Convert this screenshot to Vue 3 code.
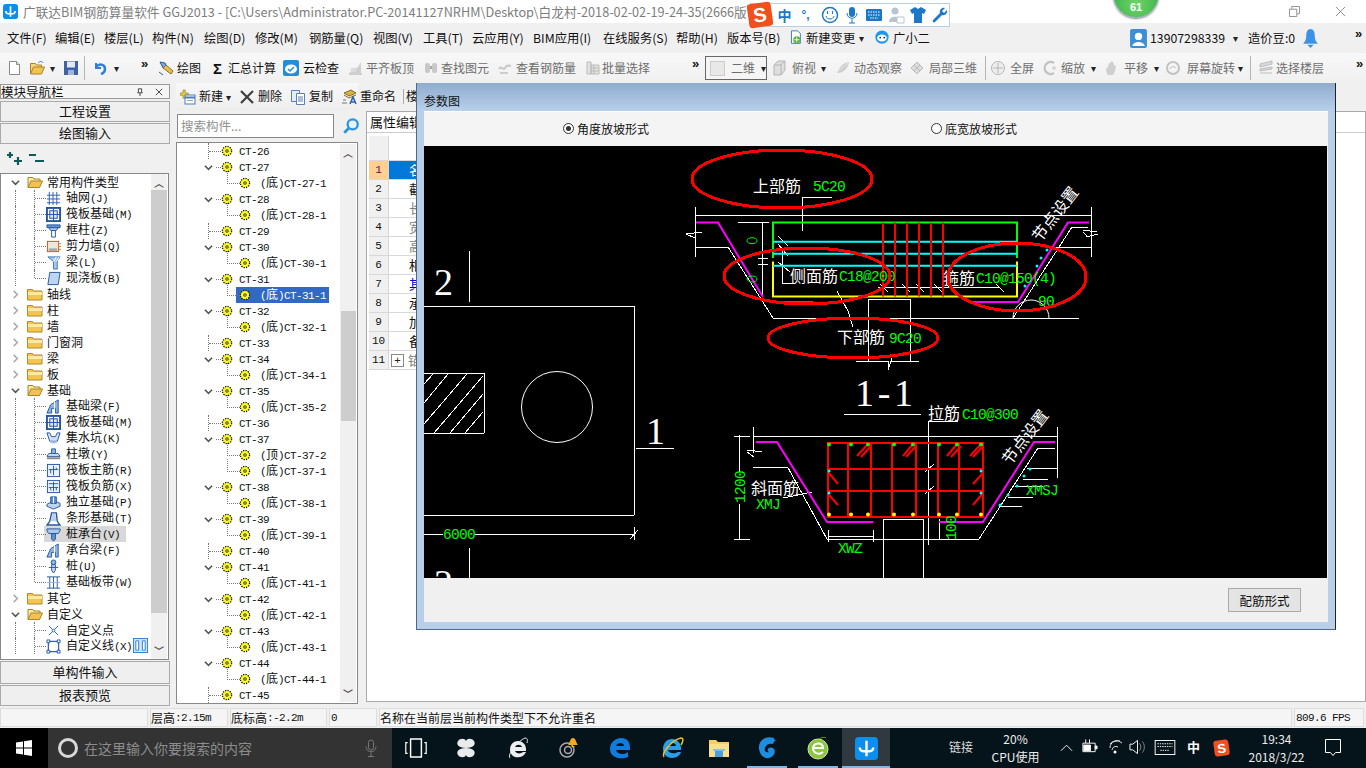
<script setup>
const ic = {
  doc: '<path d="M3.5 1.5h7l3 3v10h-10z" fill="#fff" stroke="#8a8a8a"/><path d="M10.5 1.5v3h3" fill="#ddd" stroke="#8a8a8a"/>',
  open: '<path d="M1.5 14V3.5h5l1 1.5h5v2" fill="#f6d77e" stroke="#a9822a"/><path d="M1.5 14l3-7h11l-3 7z" fill="#f3c253" stroke="#a9822a"/><path d="M9 3c2-2 4-2 5 0" fill="none" stroke="#3a78c0"/>',
  save: '<path d="M1 1h14v14H1z" fill="#3f62a6"/><path d="M4 1.500h8v6H4z" fill="#e3e9f4"/><path d="M5 10h6v5H5z" fill="#a4b6d6"/>',
  undo: '<path d="M4 3v5h5" fill="none" stroke="#2f7fd6" stroke-width="2"/><path d="M4 7c3-4 9-3 9 2 0 2-1 4-4 5" fill="none" stroke="#2f7fd6" stroke-width="2.500"/>',
  draw: '<path d="M2 2l5 1 2 4-4 1z" fill="#7fa8dc" stroke="#2e5c9c"/><path d="M5 8l8 6 2-3-7-6z" fill="#e8c04e" stroke="#8a6d1c"/><path d="M1 12l4 3" stroke="#2e5c9c"/>',
  cloud: '<rect x="0" y="0" width="16" height="16" rx="2" fill="#1f8fdc"/><ellipse cx="8" cy="9" rx="6" ry="4.500" fill="#fff"/><path d="M5 9l2 2 4-4" fill="none" stroke="#1f8fdc" stroke-width="1.500"/>',
  align: '<path d="M2 13l9-6 3-5v11z" fill="#cfcfcf"/><path d="M2 14h13" stroke="#aaa"/><path d="M4 8h5v4H4z" fill="#dcdcdc"/>',
  find: '<rect x="2" y="3" width="5" height="10" rx="2" fill="#c8c8c8"/><rect x="9" y="3" width="5" height="10" rx="2" fill="#c8c8c8"/><path d="M7 6h2v3H7z" fill="#aaa"/>',
  rebar: '<path d="M2 9c2-4 4 2 6-1 1-2 3-3 6-2" fill="none" stroke="#c6c6c6" stroke-width="2"/><path d="M3 13h8" stroke="#ccc" stroke-width="2"/>',
  batch: '<path d="M2 2h4v12H2zM6 5h8v9H6z" fill="#e2e2e2" stroke="#bbb"/><path d="M6 8h8M6 11h8M9 5v9" stroke="#bbb"/>',
  cube: '<path d="M3 5l4-4h7v9l-4 5H3z" fill="#dedede" stroke="#b5b5b5"/><path d="M3 5h7v10M10 5l4-4" fill="none" stroke="#b5b5b5"/>',
  orbit: '<path d="M2 13c2-6 6-10 12-11-1 6-5 11-12 11z" fill="#cfcfcf"/><path d="M3 11l10-8" stroke="#e8e8e8"/>',
  part3d: '<path d="M2 8l6-6 6 6-6 6z" fill="#dcdcdc" stroke="#bbb"/><path d="M5 5l6 6M11 5l-6 6" stroke="#bbb"/>',
  full: '<circle cx="8" cy="8" r="6.500" fill="#eee" stroke="#b5b5b5"/><path d="M8 3v10M3 8h10" stroke="#b5b5b5"/>',
  zoom: '<path d="M12 3a6 6 0 1 0 0 10" fill="none" stroke="#c4c4c4" stroke-width="2.500"/><circle cx="12" cy="8" r="2" fill="#d6d6d6"/>',
  pan: '<path d="M5 15c-3-4-2-7 0-8l1-4 2 0 0-2 2 1 1 3 2 1-1 5-2 4z" fill="#cfcfcf"/>',
  rotate: '<circle cx="8" cy="8" r="6" fill="none" stroke="#c2c2c2" stroke-width="2"/><path d="M5 9c1-3 4-3 6-1" fill="none" stroke="#bbb"/>',
  floor: '<path d="M2 4l12-3v3L2 7zM2 9l12-2v2L2 11zM2 13h12" fill="#dadada" stroke="#bdbdbd"/>',
  fclosed: '<path d="M.5 3.500h5l1 1.500h8.500v9H.5z" fill="#f3c64f" stroke="#b18a2a"/><path d="M1 6h14v3H1z" fill="#fbe9a8"/>',
  fopen: '<path d="M1 13V3.500h5l1 1.500h6v2" fill="#fbe9a8" stroke="#a88428"/><path d="M1 13.500l3-6.500h11.500l-3 6.500z" fill="#f3c253" stroke="#a88428"/>',
  grid: '<path d="M3.500 1v14M7.500 1v14M11.500 1v14M1 4.500h14M1 8.500h14M1 12.500h14" stroke="#2a5fae" fill="none"/>',
  raft: '<rect x="1" y="1" width="14" height="14" fill="none" stroke="#24549c" stroke-width="2"/><rect x="4" y="4" width="8" height="8" fill="#d7e5f5" stroke="#24549c"/><path d="M8 1v14M1 8h14" stroke="#24549c"/>',
  col: '<path d="M1 2h14v3H1z" fill="#5e95d4" stroke="#24549c"/><path d="M3 5h10l-2 3H5z" fill="#a9c8ea" stroke="#24549c"/><path d="M6 8h4v7H6z" fill="#fff" stroke="#24549c"/>',
  wall: '<rect x="1.500" y="2.500" width="12" height="11" fill="#efe6dc" stroke="#b65a1c"/><path d="M3 10h9v3H3z" fill="#a9a9a9"/><path d="M14 5h2M14 8h2M14 11h2" stroke="#d9782a"/>',
  beam: '<path d="M2 2h13l-3 4v9H8V7z" fill="#a9c8ea" stroke="#3a74bc"/><path d="M11 2l-3 5M14 2l-3 5" stroke="#fff"/>',
  slab: '<path d="M4 1.500h11l-2 13H2z" fill="#bcd6f2" stroke="#24549c"/>',
  fbeam: '<path d="M1 15l4-9 8-5v14H10v-5H6v5z" fill="#8fb6e4" stroke="#24549c"/><path d="M9 3v12" stroke="#fff"/>',
  pit: '<path d="M1 2l3 9h8l3-9-3 0-2 4H6L4 2z" fill="#cfe0f4" stroke="#24549c"/><path d="M3 11c2 3 8 3 10 0" fill="#a9c3df"/>',
  cap: '<path d="M6 2h4v5H6z" fill="#8fb6e4" stroke="#24549c"/><path d="M3 7h10l2 3H1z" fill="#d7e5f5" stroke="#24549c"/><path d="M1 12h14" stroke="#888" stroke-width="2"/>',
  rmain: '<rect x="1.500" y="1.500" width="13" height="13" fill="#e8f0fa" stroke="#24549c"/><path d="M8 3v10M3 7h10M5 7v4M11 7v-2" stroke="#24549c" fill="none"/>',
  rneg: '<rect x="1.500" y="1.500" width="13" height="13" fill="#e8f0fa" stroke="#24549c"/><path d="M3 5h10M3 9h10M8 3v10M5 9v3M11 9v3" stroke="#24549c" fill="none"/>',
  iso: '<path d="M1 10l7-4 7 3v3l-7 3-7-3z" fill="#c0d6f0" stroke="#24549c"/><path d="M5 2h6v7H5z" fill="#5e95d4" stroke="#24549c"/><path d="M8 2v7" stroke="#fff"/>',
  strip: '<path d="M1 15l3-4 2-9h5l1 9 3 4z" fill="#fff" stroke="#24549c" stroke-width="1.500"/><path d="M7 3h3l1 8H5z" fill="#b8d0ee"/>',
  pcap: '<path d="M1 2h14v2l-2 3H3L1 4z" fill="#a9c8ea" stroke="#24549c"/><path d="M6 7h4v6l-2 2-2-2z" fill="#5e95d4" stroke="#24549c"/>',
  pile: '<circle cx="8" cy="3.500" r="2.500" fill="#8fb6e4" stroke="#24549c"/><path d="M6 6h4v6l-2 3-2-3z" fill="#c9dcf2" stroke="#24549c"/><path d="M3 9h10" stroke="#24549c"/>',
  band: '<path d="M1 2h14M1 14h14M4 2v12M8 2v12M12 2v12" stroke="#24549c" fill="none"/><path d="M1 8h14" stroke="#8fb6e4"/>',
  pt: '<path d="M3 3l10 10M13 3L3 13" stroke="#2a65b0"/><circle cx="8" cy="8" r="1.500" fill="#fff" stroke="#2a65b0"/>',
  ln: '<rect x="2.500" y="2.500" width="11" height="11" fill="#fff" stroke="#24549c" stroke-width="1.200"/><path d="M1 1h3v3H1zM12 1h3v3h-3zM1 12h3v3H1zM12 12h3v3h-3z" fill="#fff" stroke="#24549c"/>',
  ct: '<circle cx="6" cy="6" r="4.600" fill="#ffff20" stroke="#111" stroke-width="1.300" stroke-dasharray="1.300 1.100"/><circle cx="6" cy="6" r="1.800" fill="#444"/><circle cx="6" cy="6" r=".7" fill="#ffff20"/>',
  plus: '<path d="M4 0h3v4h4v3H7v4H4V7H0V4h4z" fill="#e9cf4e" stroke="#8a7414" stroke-width=".8" transform="translate(0 1) scale(.75)"/><rect x="5" y="6" width="10" height="9" fill="#fff" stroke="#4a7cbc"/><path d="M5 8.500h10" stroke="#4a7cbc" stroke-width="2"/><path d="M7 11.500h6" stroke="#9ab"/>',
  del: '<path d="M2 2l12 12M14 2L2 14" stroke="#404040" stroke-width="2.200"/>',
  copy: '<path d="M1.500 1.500h8v11h-8z" fill="#e4eefa" stroke="#5a7fb0"/><path d="M6.500 4.500h8v11h-8z" fill="#fff" stroke="#5a7fb0"/><path d="M8 8h5M8 10h5M8 12h5" stroke="#5a7fb0"/>',
  rename: '<path d="M3 4l7-3 5 3-7 3z" fill="#d8b24a" stroke="#8a6d1c"/><path d="M3 6l5 3 7-3" fill="none" stroke="#8a6d1c"/><path d="M1 14h5M2 11h3" stroke="#777"/><path d="M9 15l3-7 3 7M10 13h4" fill="none" stroke="#2e5fb0" stroke-width="1.500"/>',
  lens: '<circle cx="9.500" cy="6.500" r="4.500" fill="#e4f3fc" stroke="#2b95dc" stroke-width="2"/><path d="M6 10l-4 4" stroke="#2b95dc" stroke-width="2.500"/>',
  file: '<path d="M4 1h7l3 3v11H4z" fill="#fff" stroke="#2a6dbc"/><circle cx="10" cy="11" r="4" fill="#5aae32"/><path d="M10 8v6M7 11h6" stroke="#fff"/>',
  mascot: '<circle cx="8" cy="8" r="7.500" fill="#1c9ae8"/><ellipse cx="8" cy="9" rx="5.500" ry="4" fill="#fff"/><circle cx="6" cy="8.500" r="1" fill="#124"/><circle cx="10.500" cy="8.500" r="1" fill="#124"/>',
  user: '<rect width="16" height="18" rx="2" fill="#3b8fd9"/><circle cx="8" cy="7" r="3.500" fill="#fff"/><path d="M2 16c1-5 11-5 12 0z" fill="#fff"/>',
  bell: '<path d="M8 0c3 0 4 3 4 6 0 4 1 6 3 8H1c2-2 3-4 3-8 0-3 1-6 4-6z" fill="#3d92e6"/><path d="M5 15h6l-3 3z" fill="#3d92e6"/>',
}

const place = list => list.map((it, i) => ({
  ...it,
  w: (list[i + 1] ? list[i + 1].x : 1366) - it.x,
  iw: it.tx ? it.tx - it.x : 0,
}))

const menus = place([
  { x: 7, t: '文件(F)' }, { x: 55, t: '编辑(E)' }, { x: 104, t: '楼层(L)' }, { x: 152, t: '构件(N)' },
  { x: 204, t: '绘图(D)' }, { x: 255, t: '修改(M)' }, { x: 309, t: '钢筋量(Q)' }, { x: 373, t: '视图(V)' },
  { x: 423, t: '工具(T)' }, { x: 472, t: '云应用(Y)' }, { x: 533, t: 'BIM应用(I)' }, { x: 603, t: '在线服务(S)' },
  { x: 676, t: '帮助(H)' }, { x: 727, t: '版本号(B)' },
  { x: 787, tx: 806, t: '新建变更', i: 'file' }, { x: 859, a: 1 },
  { x: 874, tx: 893, t: '广小二', i: 'mascot' },
  { x: 1130, tx: 1150, t: '13907298339', i: 'user' }, { x: 1233, a: 1 },
  { x: 1248, t: '造价豆:0' }, { x: 1302, i: 'bell', tx: 1340 }, { x: 1353, m: 1 },
])

const tools = place([
  { x: 6, i: 'doc', tx: 29 }, { x: 29, i: 'open', tx: 50 }, { x: 50, a: 1 }, { x: 63, i: 'save', tx: 84 },
  { x: 84, s: 1 }, { x: 92, i: 'undo', tx: 114 }, { x: 114, a: 1 }, { x: 139, m: 1 },
  { x: 158, tx: 177, t: '绘图', i: 'draw' }, { x: 211, tx: 228, t: '汇总计算', sig: 1 },
  { x: 283, tx: 303, t: '云检查', i: 'cloud' }, { x: 347, tx: 366, t: '平齐板顶', i: 'align', g: 1 },
  { x: 423, tx: 441, t: '查找图元', i: 'find', g: 1 }, { x: 497, tx: 516, t: '查看钢筋量', i: 'rebar', g: 1 },
  { x: 585, tx: 602, t: '批量选择', i: 'batch', g: 1 }, { x: 690, m: 1 }, { x: 705, combo: 1 },
  { x: 771, tx: 792, t: '俯视', i: 'cube', g: 1 }, { x: 821, a: 1 }, { x: 835, tx: 854, t: '动态观察', i: 'orbit', g: 1 },
  { x: 909, tx: 929, t: '局部三维', i: 'part3d', g: 1 }, { x: 985, s: 1 }, { x: 990, tx: 1010, t: '全屏', i: 'full', g: 1 },
  { x: 1042, tx: 1061, t: '缩放', i: 'zoom', g: 1 }, { x: 1091, a: 1 }, { x: 1103, tx: 1124, t: '平移', i: 'pan', g: 1 },
  { x: 1154, a: 1 }, { x: 1165, tx: 1187, t: '屏幕旋转', i: 'rotate', g: 1 }, { x: 1238, a: 1 },
  { x: 1250, s: 1 }, { x: 1258, tx: 1276, t: '选择楼层', i: 'floor', g: 1 }, { x: 1354, m: 1 },
])

const nav = [
  { f: 'open', t: '常用构件类型' },
  { i: 'grid', t: '轴网(J)' }, { i: 'raft', t: '筏板基础(M)' }, { i: 'col', t: '框柱(Z)' }, { i: 'wall', t: '剪力墙(Q)' },
  { i: 'beam', t: '梁(L)' }, { i: 'slab', t: '现浇板(B)', last: 1 },
  { f: 'closed', t: '轴线' }, { f: 'closed', t: '柱' }, { f: 'closed', t: '墙' }, { f: 'closed', t: '门窗洞' },
  { f: 'closed', t: '梁' }, { f: 'closed', t: '板' },
  { f: 'open', t: '基础' },
  { i: 'fbeam', t: '基础梁(F)' }, { i: 'raft', t: '筏板基础(M)' }, { i: 'pit', t: '集水坑(K)' }, { i: 'cap', t: '柱墩(Y)' },
  { i: 'rmain', t: '筏板主筋(R)' }, { i: 'rneg', t: '筏板负筋(X)' }, { i: 'iso', t: '独立基础(P)' }, { i: 'strip', t: '条形基础(T)' },
  { i: 'pcap', t: '桩承台(V)', sel: 1 }, { i: 'fbeam', t: '承台梁(F)' }, { i: 'pile', t: '桩(U)' }, { i: 'band', t: '基础板带(W)', last: 1 },
  { f: 'closed', t: '其它' },
  { f: 'open', t: '自定义' },
  { i: 'pt', t: '自定义点' }, { i: 'ln', t: '自定义线(X)' },
]

const groups = [
  ['CT-26'], ['CT-27', '(底)CT-27-1'], ['CT-28', '(底)CT-28-1'], ['CT-29'], ['CT-30', '(底)CT-30-1'],
  ['CT-31', '(底)CT-31-1'], ['CT-32', '(底)CT-32-1'], ['CT-33'], ['CT-34', '(底)CT-34-1'], ['CT-35', '(底)CT-35-2'],
  ['CT-36'], ['CT-37', '(顶)CT-37-2', '(底)CT-37-1'], ['CT-38', '(底)CT-38-1'], ['CT-39', '(底)CT-39-1'], ['CT-40'],
  ['CT-41', '(底)CT-41-1'], ['CT-42', '(底)CT-42-1'], ['CT-43', '(底)CT-43-1'], ['CT-44', '(底)CT-44-1'], ['CT-45'],
]
const cts = groups.flatMap(g => [
  { t: g[0], d: 0, kids: g.length > 1 },
  ...g.slice(1).map(t => ({ t, d: 1, sel: t.includes('31-1') })),
])

const runs = s => s.split(/([\u4e00-\u9fff]+)/).filter(Boolean).map(t => ({ t, zh: /[\u4e00-\u9fff]/.test(t) }))

const props = [
  { t: '名', c: 'on' }, { t: '截' }, { t: '长', c: 'dim' }, { t: '宽', c: 'dim' }, { t: '高', c: 'dim' },
  { t: '相' }, { t: '其', c: 'link' }, { t: '承' }, { t: '加' }, { t: '备' }, { t: '锚', c: 'dim', plus: 1 },
]

const hatch = [[424,384,433,374],[424,403,448,374],[424,424,467,374],[434,433,483,376],[450,433,483,394],[465,433,483,412]]
const w1 = [
  [695,215.500,1091,215.500],[695,207,695,257],[1091,207,1091,257],[695,247,728,247],[728,247,773,318],[773,318,1079,318],
  [1013,318,1072,227],[1072,227,1088,227],[1052,247,1091,247],[802,197,832,197],[802,197,802,231],[782,250,782,283],[782,283,795,283],
  [868,299,910,299],[868,299,868,361],[910,299,910,361],[856,361,888,361],[890,361,919,361],[888,361,888,370],[888,370,892,358],
  [738,222,769,222],[762,222,762,296],[758,258,768,258],[758,264,768,264],
  [837,291,848,311],[848,311,853,327],[778,236,788,246],[778,244,788,256],[778,262,790,272],
  [878,287,1000,287],[880,284,888,292],[902,284,910,292],[916,284,924,292],[934,284,942,292],[946,284,954,292],[996,284,1004,292],
  [686,234,702,232],[686,234,695,238],[695,238,695,232],[1083,230,1097,232],[1083,232,1088,237],[1086,237,1098,234],
  [844,414,921,414],[928,421.700,958,421.700],[928,421,928,545],[753,436,1057,436],[753,427,753,453],[1057,427,1057,478],
  [739,435,739,472],[739,504,739,539],[734,436,750,436],[734,539,750,539],[753,467.700,788,467.700],[788,467.700,827,539],[827,539,979,539],
  [979,539,1038,448],[1038,448,1055,448],[1027,468,1057,468],[883,519,923,519],[883,519,883,578],[923,519,923,578],
  [783,498,812,492],[828,536,873,536],[828,530,828,542],[873,530,873,542],[939,519,939,540],[1023,479,1048,479],
  [1015,486,1043,486],[1008,497,1033,497],[1000,506,1022,506],[925,472,934,464],[925,494,934,486],[747,450,762,452],[747,452,754,457],
  [634,306,424,306],[634,306,634,515],[634,515,424,515],[424,373,484,373],[484,373,484,433],[484,433,424,433],
  [469,251,469,302],[636,448,674,448],[424,534,443,534],[475,534,634,534],[634,527,634,540],[630,539,638,530],[469,548,469,578],
]
const mag = ['696,222.500 718,222.500 763,297','782,302 813,302','970,302 1018,302 1068,222.500 1089,222.500','756,442 777,442 827,522 873,522','939,522 983,522 1034,442 1055,442']
const reds = [883,895,907,919,931,943]
const gridV = [848,871,892,916,938,959]
const gridS = [[857,456,868,444],[861,457,871,446],[903,456,913,444],[906,457,916,446],[947,456,957,444],[951,457,961,446],[970,456,981,444],[973,457,983,446],[829,473,838,484],[829,495,838,505],[973,484,983,473],[973,505,983,493]]
const topX = [829,851,868,894,913,939,957,981]
const cyanDots = [[829,471],[829,493],[981,471],[981,493],[1000,505],[1008,495],[1017,486],[1024,476],[1030,469],[1047,250],[1041,258],[1037,266],[1025,286]]
</script>

<template>
  <div class="app">
    <header class="title">
      <svg class="logo" viewBox="0 0 16 16"><rect width="16" height="16" rx="3" fill="#0a8fee"/><path d="M8 2.500v11M3 7.500c0 3 2 3 5 3s5 0 5-3" fill="none" stroke="#fff" stroke-width="1.800"/></svg>
      <span class="ttext">广联达BIM钢筋算量软件 GGJ2013 - [C:\Users\Administrator.PC-20141127NRHM\Desktop\白龙村-2018-02-02-19-24-35(2666版</span>
      <svg class="wc" viewBox="0 0 12 12"><path d="M.5 3.500h8v8h-8zM3 3V.5h8.500v8H9" fill="none" stroke="#888"/></svg>
      <svg class="wc close" viewBox="0 0 12 12"><path d="M1 1l10 10M11 1L1 11" stroke="#888"/></svg>
    </header>

    <nav class="bar menu">
      <div v-for="m in menus" :key="m.x" class="slot" :style="{ width: m.w + 'px' }">
        <span v-if="m.iw" class="ico" :style="{ width: m.iw + 'px' }"><svg :class="m.i === 'user' || m.i === 'bell' ? 'i18' : 'i16'" viewBox="0 0 16 18" v-html="ic[m.i]"></svg></span>
        <span v-if="m.a" class="arr">▾</span>
        <span v-else-if="m.m" class="more">»</span>
        <span v-else>{{ m.t }}</span>
      </div>
    </nav>

    <div class="bar tools">
      <div v-for="t in tools" :key="t.x" class="slot" :class="{ gray: t.g }" :style="{ width: t.w + 'px' }">
        <span v-if="t.sig" class="ico sig" :style="{ width: t.iw + 'px' }">Σ</span>
        <span v-else-if="t.iw" class="ico" :style="{ width: t.iw + 'px' }"><svg class="i16" viewBox="0 0 16 16" v-html="ic[t.i]"></svg></span>
        <span v-if="t.a" class="arr">▾</span>
        <span v-else-if="t.m" class="more">»</span>
        <span v-else-if="t.s" class="sep"></span>
        <span v-else-if="t.combo" class="combo"><i class="sq"></i><span>二维</span><span class="arr">▾</span></span>
        <span v-else>{{ t.t }}</span>
      </div>
    </div>

    <main class="main">
      <aside class="left">
        <div class="nav-head"><span>模块导航栏</span><span class="pin">
          <svg viewBox="0 0 10 10"><path d="M3 1h4v4l1 1H2l1-1zM5 6v4" fill="none" stroke="#222"/></svg>
          <svg viewBox="0 0 10 10"><path d="M1 1l8 8M9 1L1 9" stroke="#222"/></svg></span></div>
        <button class="btn b1">工程设置</button>
        <button class="btn">绘图输入</button>
        <div class="exp">
          <svg viewBox="0 0 20 16"><path d="M4 1v6M1 4h6M12 6v8M8 10h8" stroke="#0c5a5a" stroke-width="2.200"/></svg>
          <svg viewBox="0 0 20 16"><path d="M1 4h7M7 10h9" stroke="#0c5a5a" stroke-width="2.200"/></svg>
        </div>
        <div class="tree">
          <div class="scrollv nav-sb"><span class="up">︿</span><i class="thumb"></i><span class="down">﹀</span></div>
          <div v-for="(n, i) in nav" :key="i" class="nrow" :class="n.f ? 'top' : 'leaf'">
            <template v-if="n.f">
              <svg class="chev" viewBox="0 0 10 10"><path :d="n.f === 'open' ? 'M1 3l4 4 4-4' : 'M3 1l4 4-4 4'" fill="none" :stroke="n.f === 'open' ? '#555' : '#aaa'" stroke-width="1.800"/></svg>
              <svg class="fold" viewBox="0 0 16 16" v-html="ic['f' + n.f]"></svg>
              <span class="zh top-t">{{ n.t }}</span>
            </template>
            <template v-else>
              <i class="g0"></i><i class="g1" :class="{ last: n.last }"></i>
              <span class="nsel" :class="{ on: n.sel }">
                <svg class="nic" viewBox="0 0 16 16" v-html="ic[n.i]"></svg>
                <span class="lbl"><span v-for="(r, k) in runs(n.t)" :key="k" :class="r.zh ? 'zh' : 'la'">{{ r.t }}</span></span>
              </span>
            </template>
          </div>
          <svg class="float" viewBox="0 0 16 16"><rect x=".5" y=".5" width="15" height="15" fill="#cfe4fa" stroke="#2a7fd6"/><path d="M3 3h3v10H3zM10 3h3v10h-3z" fill="#fff" stroke="#2a7fd6"/></svg>
        </div>
        <button class="btn b2">单构件输入</button>
        <button class="btn">报表预览</button>
      </aside>

      <section class="mid">
        <div class="mtool">
          <span class="mi"><svg class="i16" viewBox="0 0 16 16" v-html="ic.plus"></svg>新建<span class="arr">▾</span></span>
          <span class="mi"><svg class="i16" viewBox="0 0 16 16" v-html="ic.del"></svg>删除</span>
          <span class="mi"><svg class="i16" viewBox="0 0 16 16" v-html="ic.copy"></svg>复制</span>
          <span class="mi"><svg class="i16" viewBox="0 0 16 16" v-html="ic.rename"></svg>重命名</span>
          <span class="mi sepl">楼</span>
        </div>
        <div class="search">
          <span class="sbox">搜索构件...</span>
          <svg class="i18" viewBox="0 0 16 16" v-html="ic.lens"></svg>
        </div>
        <div class="cts">
          <div class="scrollv ct-sb"><span class="up">︿</span><i class="thumb"></i><span class="down">﹀</span></div>
          <div v-for="c in cts" :key="c.t" class="crow" :class="c.d ? 'kid' : 'par'">
            <template v-if="c.d === 0">
              <svg v-if="c.kids" class="cchev" viewBox="0 0 10 10"><path d="M1 3l4 4 4-4" fill="none" stroke="#555" stroke-width="1.800"/></svg>
              <i v-else class="cg"></i>
              <i class="cdot"></i>
            </template>
            <i v-else class="kg"></i>
            <span class="csel" :class="{ on: c.sel }">
              <svg class="cic" viewBox="0 0 12 12" v-html="ic.ct"></svg>
              <span class="lbl"><span v-for="(r, k) in runs(c.t)" :key="k" :class="r.zh ? 'zh' : 'la'">{{ r.t }}</span></span>
            </span>
          </div>
        </div>
      </section>

      <section class="right">
        <div class="tab">属性编辑</div>
        <div class="table">
          <div class="thead"><span class="num"></span><span class="cell"></span></div>
          <div v-for="(p, i) in props" :key="i" class="trow">
            <span class="num" :class="{ cur: i === 0 }">{{ i + 1 }}</span>
            <span class="cell" :class="p.c"><b v-if="p.plus" class="plus">+</b>{{ p.t }}</span>
          </div>
        </div>
      </section>
    </main>

    <footer class="status">
      <span class="st s0"></span>
      <span class="st s1"><span class="zh">层高</span><span class="la">:2.15m</span></span>
      <span class="st s2"><span class="zh">底标高</span><span class="la">:-2.2m</span></span>
      <span class="st s3"><span class="la">0</span></span>
      <span class="st s4"><span class="zh">名称在当前层当前构件类型下不允许重名</span></span>
      <span class="st s5"><span class="la">809.6 FPS</span></span>
    </footer>

    <div class="task">
      <div class="start"><svg viewBox="0 0 16 16"><path d="M0 2.500l7-1v6H0zM8 1.300l8-1.300v7.500H8zM0 8.500h7v6l-7-1zM8 8.500h8V16l-8-1.300z" fill="#fff"/></svg></div>
      <div class="tsearch">
        <i class="cortana"></i><span>在这里输入你要搜索的内容</span>
        <svg class="mic" viewBox="0 0 12 18"><rect x="3.500" y=".5" width="5" height="10" rx="2.500" fill="none" stroke="#777"/><path d="M1 7c0 7 10 7 10 0M6 13v4M3 17h6" fill="none" stroke="#777"/></svg>
      </div>
      <div class="apps">
        <span class="app-i a0"><svg viewBox="0 0 20 20"><path d="M5.500 2.500h9v15h-9z" fill="none" stroke="#fff" stroke-width="1.200"/><path d="M3 5.500H1.500v9H3M17 5.500h1.500v9H17" fill="none" stroke="#fff"/></svg></span>
        <span class="app-i a1"><svg viewBox="0 0 24 24"><path d="M12 12C4 12 2 8 4 5s7-3 8 0c1-3 6-3 8 0s0 7-8 7c8 0 10 4 8 7s-7 3-8 0c-1 3-6 3-8 0s0-7 8-7z" fill="#e8eaec"/></svg></span>
        <span class="app-i a2"><svg viewBox="0 0 24 24"><path d="M4 14C4 8 8 5 12 5s8 3 8 8v2H9c1 3 6 3 8 1h3c-2 5-8 6-11 5-3-1-5-4-5-7zm5-3h7c-1-3-6-3-7 0z" fill="#eee"/><path d="M4 22C1 18 12 5 19 2c2 0 3 1 2 5" fill="none" stroke="#eee"/></svg></span>
        <span class="app-i a3"><svg viewBox="0 0 24 24"><circle cx="10" cy="14" r="7" fill="none" stroke="#aaa" stroke-width="1.500"/><circle cx="11" cy="14" r="3.500" fill="none" stroke="#aaa" stroke-width="1.500"/><path d="M16 2c-3 0-3 5-5 7h10c-2-2-2-7-5-7zM14 10h4l-2 2z" fill="#f5a623"/></svg></span>
        <span class="app-i a4"><svg viewBox="0 0 24 24"><path d="M2 13C2 6 8 2 13 2c6 0 9 4 9 10v2H8c1 5 9 5 12 2v5c-7 3-18 1-18-8zm6-3h8c0-4-7-4-8 0z" fill="#0f7ce0"/></svg></span>
        <span class="app-i a5"><svg viewBox="0 0 24 24"><path d="M3 13C3 7 7 3 12 3s9 4 9 9v2H8c1 4 7 4 10 2h3c-2 6-9 7-13 5-3-1-5-4-5-8zm5-3h8c0-4-7-4-8 0z" fill="#2a9fe8"/><path d="M4 21C1 17 12 4 21 2c3 0 2 4 0 7" fill="none" stroke="#f0c020" stroke-width="1.500"/></svg></span>
        <span class="app-i a6"><svg viewBox="0 0 24 24"><path d="M2 4h7l2 2h11v4H2z" fill="#f5d060"/><path d="M2 8h20v13H2z" fill="#fbe08a"/><path d="M8 14h8v7H8z" fill="#4a9fe0"/><path d="M6 13h12v2H6z" fill="#7cc4f0"/></svg></span>
        <span class="app-i a7 und"><svg viewBox="0 0 24 24"><path d="M19 2C9-1 3 6 4 13c1 7 6 10 10 9 5-1 7-6 5-9-2-2-5-2-6 0-1 1 0 3 1 3-3 1-5-1-4-4 1-4 5-5 8-4 0-2 2-3 3-4-1 0-2 0-2-2z" fill="#1c8de0"/></svg></span>
        <span class="app-i a8 und"><svg viewBox="0 0 24 24"><circle cx="12" cy="13" r="10" fill="#8cc63f" stroke="#cde9a5"/><path d="M7 12h10c0-6-9-6-10 0 0 6 7 7 10 4" fill="none" stroke="#fff" stroke-width="2"/><path d="M13 3c3-2 6-2 7-1" fill="none" stroke="#5a9a20"/></svg></span>
        <span class="app-i a9 und"><svg viewBox="0 0 24 24"><rect width="24" height="24" rx="4" fill="#0a8fee"/><path d="M12 4v16M5 11c0 4 3 4 7 4s7 0 7-4" fill="none" stroke="#fff" stroke-width="2.500"/></svg></span>
      </div>
      <div class="tray">
        <span class="tr-link">链接</span>
        <span class="cpu"><span>20%</span><span>CPU使用</span></span>
        <svg class="ti t1" viewBox="0 0 14 8"><path d="M1 7l6-6 6 6" fill="none" stroke="#fff"/></svg>
        <svg class="ti t2" viewBox="0 0 18 16"><path d="M2 5h13v9H2z" fill="none" stroke="#fff"/><path d="M3 7h7v6H3zM15 8h2v3h-2zM5 1v4M9 1v4" fill="#fff" stroke="#fff"/></svg>
        <svg class="ti t3" viewBox="0 0 14 14"><path d="M1 8a7 7 0 0 1 12-5M3 10a4 4 0 0 1 6-3M1 4a10 10 0 0 1 10-3" fill="none" stroke="#ddd"/><circle cx="6" cy="12" r="1.500" fill="#fff"/></svg>
        <svg class="ti t4" viewBox="0 0 18 16"><path d="M1 5h3l5-4v14l-5-4H1z" fill="none" stroke="#fff"/><path d="M11 4c2 2 2 6 0 8M14 2c3 3 3 9 0 12" fill="none" stroke="#888"/></svg>
        <svg class="ti t5" viewBox="0 0 22 16"><rect x=".5" y=".5" width="21" height="15" fill="none" stroke="#fff"/><path d="M3 4h16M3 7h16M6 11h10" stroke="#fff" stroke-dasharray="1.500 1"/></svg>
        <span class="t6">中</span>
        <span class="t7"><b>S</b></span>
        <span class="clock"><span>19:34</span><span>2018/3/22</span></span>
        <svg class="ti t8" viewBox="0 0 16 18"><path d="M.5 .5h15v13h-5l-2.500 3-2.500-3h-5z" fill="none" stroke="#fff"/></svg>
      </div>
    </div>

    <section class="dlg">
      <div class="dlg-t">参数图</div>
      <div class="dlg-b">
        <div class="radios">
          <label class="radio"><i class="dot on"></i>角度放坡形式</label>
          <label class="radio r2"><i class="dot"></i>底宽放坡形式</label>
        </div>
        <svg class="cad" viewBox="424 146 903 432">
          <rect x="424" y="146" width="903" height="432" fill="#000"/>
          <g stroke="#fff" shape-rendering="crispEdges">
            <line v-for="(l, i) in w1" :key="i" :x1="l[0]" :y1="l[1]" :x2="l[2]" :y2="l[3]"/>
            <line v-for="(l, i) in hatch" :key="'h' + i" :x1="l[0]" :y1="l[1]" :x2="l[2]" :y2="l[3]"/>
          </g>
          <circle cx="557" cy="407" r="35.500" fill="none" stroke="#fff"/>
          <polyline v-for="(m, i) in mag" :key="'m' + i" :points="m" fill="none" stroke="#f0f" stroke-width="2"/>
          <path d="M773 258V222.500H1017V258" fill="none" stroke="#0f0" stroke-width="2"/>
          <path d="M773 261.500V296.500H1017V261.500" fill="none" stroke="#ff0" stroke-width="2"/>
          <path d="M773 241.700H1017M773 253.700H1017M773 265.700H1017" stroke="#0ff" stroke-width="2"/>
          <g stroke="#f00" stroke-width="2">
            <line v-for="x in reds" :key="x" :x1="x" y1="222.500" :x2="x" y2="296.500"/>
            <rect x="828" y="443" width="155" height="74" fill="none"/>
            <line v-for="x in gridV" :key="'v' + x" :x1="x" y1="443" :x2="x" y2="517"/>
            <path d="M828 469H983M828 491H983"/>
            <line v-for="(l, i) in gridS" :key="'s' + i" :x1="l[0]" :y1="l[1]" :x2="l[2]" :y2="l[3]"/>
          </g>
          <circle v-for="x in topX" :key="'g' + x" :cx="x" cy="444.500" r="2" fill="#0f0"/>
          <circle v-for="x in topX" :key="'y' + x" :cx="x" cy="514.500" r="2" fill="#ff0"/>
          <circle v-for="(d, i) in cyanDots" :key="'c' + i" :cx="d[0]" :cy="d[1]" r="1.500" fill="#0ff"/>
          <ellipse cx="752" cy="240.700" rx="5" ry="3" fill="none" stroke="#0f0"/>
          <ellipse cx="752" cy="279" rx="5" ry="3" fill="none" stroke="#0f0"/>
          <path d="M1013 318a18 18 0 0 1 18-18a18 18 0 0 1 18 18" fill="none" stroke="#fff"/>

          <text class="ser" x="434" y="295" font-size="38">2</text>
          <text class="ser" x="434" y="596" font-size="38">2</text>
          <text class="ser" x="646" y="444" font-size="38">1</text>
          <text class="ser" x="855" y="406" font-size="38" textLength="58" lengthAdjust="spacing">1-1</text>

          <text class="zh-c" x="753" y="192" font-size="16">上部筋</text>
          <text class="gn" x="813" y="191">5C20</text>
          <text class="zh-c" x="790" y="282" font-size="16">侧面筋</text>
          <text class="gn" x="839" y="281">C18@200</text>
          <text class="zh-c" x="943" y="284" font-size="16">箍筋</text>
          <text class="gn" x="976" y="283">C10@150(4)</text>
          <text class="gn" x="1038" y="306">90</text>
          <text class="zh-c" x="837" y="343" font-size="16">下部筋</text>
          <text class="gn" x="889" y="343">9C20</text>
          <text class="zh-c" x="928" y="419" font-size="16">拉筋</text>
          <text class="gn" x="962" y="419">C10@300</text>
          <text class="zh-c" x="751" y="494" font-size="16">斜面筋</text>
          <text class="gn" x="756" y="509">XMJ</text>
          <text class="gn" x="838" y="553">XWZ</text>
          <text class="gn" x="1026" y="495">XMSJ</text>
          <text class="gn" x="443" y="539">6000</text>
          <text class="gn" transform="rotate(-90 745 488)" x="730" y="488">1200</text>
          <text class="gn" transform="rotate(-90 956 528)" x="944" y="528">100</text>
          <text class="zh-c" transform="rotate(-52 1055 214)" x="1055" y="220" font-size="16" text-anchor="middle">节点设置</text>
          <text class="zh-c" transform="rotate(-52 1025 437)" x="1025" y="443" font-size="16" text-anchor="middle">节点设置</text>

          <g fill="none" stroke="#f00" stroke-width="3" shape-rendering="crispEdges">
            <ellipse cx="782" cy="179" rx="90" ry="29"/>
            <ellipse cx="807" cy="276" rx="83" ry="28"/>
            <ellipse cx="1017" cy="277" rx="69" ry="34"/>
            <ellipse cx="853" cy="338" rx="85" ry="20"/>
          </g>
        </svg>
        <div class="dlg-f"><button class="peijin">配筋形式</button></div>
      </div>
    </section>

    <div class="ball"><span>61</span></div>
    <div class="sogou">
      <span class="slogo"><b>S</b></span>
      <span class="sg-t">中</span>
      <span class="sg-p">°,</span>
      <svg viewBox="0 0 18 18"><circle cx="9" cy="9" r="7.500" fill="#fff" stroke="#1b78c8" stroke-width="1.500"/><path d="M5 10c1 4 7 4 8 0" fill="none" stroke="#1b78c8"/><path d="M6.500 5v3M11.500 5v3" stroke="#1b78c8"/></svg>
      <svg viewBox="0 0 18 18"><rect x="6" y="1" width="6" height="10" rx="3" fill="#1b78c8"/><path d="M4 7c0 7 10 7 10 0M9 13v4M6 17h6" fill="none" stroke="#1b78c8"/></svg>
      <svg viewBox="0 0 18 18"><rect x="1" y="3" width="16" height="12" rx="1" fill="#1b78c8"/><path d="M3 6h12M3 9h12M5 12h8" stroke="#fff" stroke-dasharray="1.500 1"/></svg>
      <svg viewBox="0 0 18 18"><circle cx="8" cy="5" r="3.500" fill="#b8c4d0"/><path d="M2 16c0-7 12-7 12 0z" fill="#b8c4d0"/><path d="M10 11h7v6h-7z" fill="#fff" stroke="#b8c4d0"/></svg>
      <svg viewBox="0 0 18 18"><path d="M6 1L1 4l2 4 2-1v10h8V7l2 1 2-4-5-3-3 2z" fill="#1b78c8"/></svg>
      <svg viewBox="0 0 18 18"><path d="M16 4l-3 3-2-2 3-3c-3-1-6 2-5 5L2 14c-1 2 1 3 2 2l7-7c3 1 6-2 5-5z" fill="#1b78c8"/></svg>
    </div>
  </div>
</template>

<style>
html, body { margin: 0; overflow: hidden; }
</style>

<style scoped>
.app { position: relative; width: 1366px; height: 768px; overflow: hidden; display: flex; flex-direction: column; background: #f0f0f0; font: 13px/1.2 "Noto Sans CJK SC", "Noto Sans", sans-serif; color: #111; }
button { font: inherit; color: #111; padding: 0; }
i { display: block; }
.zh { font: 12px/16px "Noto Sans CJK SC", sans-serif; }
.la { font: 11px/16px "Liberation Mono", monospace; letter-spacing: -.6px; }

.title { height: 23px; flex: none; background: #fff; display: flex; align-items: center; }
.logo { width: 15px; height: 15px; margin-left: 3px; flex: none; }
.ttext { margin-left: 5px; color: #7d7d7d; font-size: 12.700px; width: 724px; white-space: nowrap; overflow: hidden; flex: none; }
.wc { width: 11px; height: 11px; margin-left: 542px; flex: none; }
.wc.close { margin-left: 35px; }

.bar { flex: none; display: flex; align-items: center; }
.menu { height: 30px; font-size: 12.300px; }
.tools { height: 30px; background: linear-gradient(#f8f8f8, #f0f0f0); font-size: 12px; }
.bar > .slot:first-child { margin-left: var(--start); }
.menu { --start: 7px; }
.tools { --start: 6px; }
.slot { display: flex; align-items: center; flex: none; white-space: nowrap; height: 100%; }
.gray { color: #6e6e6e; }
.ico { display: flex; align-items: center; flex: none; }
.i16 { width: 16px; height: 16px; display: block; flex: none; }
.i18 { width: 17px; height: 19px; display: block; flex: none; }
.sig { font: bold 15px/1 "Liberation Sans", sans-serif; padding-left: 2px; box-sizing: border-box; }
.arr { font-size: 10px; color: #222; }
.more { font: bold 13px/1 "Liberation Sans", sans-serif; margin-top: -10px; padding-left: 2px; }
.sep { width: 1px; height: 24px; background: #b5b5b5; }
.combo { width: 62px; height: 24px; border: 1px solid #666; display: flex; align-items: center; gap: 6px; padding: 0 0 0 4px; box-sizing: border-box; color: #6e6e6e; background: #f5f5f5; }
.sq { width: 13px; height: 13px; background: #e8e8e8; border: 1px solid #ccc; flex: none; }

.main { height: 625px; flex: none; display: flex; }
.left { width: 170px; flex: none; display: flex; flex-direction: column; }
.nav-head { height: 15px; margin-top: 1px; border: 1px solid #999; box-sizing: border-box; background: #f5f5f5; display: flex; justify-content: space-between; align-items: center; font-size: 12.500px; line-height: 13px; }
.pin { display: flex; gap: 11px; padding-right: 6px; }
.pin svg { width: 8px; height: 8px; }
.btn { height: 21px; margin-top: 1px; background: #efefef; border: 1px solid #aaa; box-sizing: border-box; flex: none; font-size: 13px; line-height: 16px; padding-bottom: 2px; }
.b1 { margin-top: 2px; }
.b2 { height: 23px; }
.exp { height: 29px; flex: none; display: flex; align-items: center; gap: 2px; padding-left: 6px; background: #f0f0f0; }
.exp svg { width: 20px; height: 16px; }
.tree { position: relative; height: 487px; flex: none; border: 1px solid #888; background: #fff; overflow: hidden; padding-top: 0; margin-right: 1px; box-sizing: border-box; }
.scrollv { position: absolute; top: 0; bottom: 0; width: 16px; background: #f0f0f0; z-index: 2; color: #555; }
.nav-sb { right: 1px; }
.ct-sb { right: 1px; top: 1px; bottom: 1px; }
.up, .down { position: absolute; left: 0; width: 16px; text-align: center; font: bold 10px/16px "Noto Sans CJK SC", sans-serif; }
.up { top: 1px; } .down { bottom: 0; }
.nav-sb .thumb { position: absolute; top: 16px; left: 0; width: 16px; height: 423px; background: #cdcdcd; }
.ct-sb .thumb { position: absolute; top: 167px; left: 1px; width: 15px; height: 110px; background: #cdcdcd; }

.nrow { height: 16px; position: relative; display: flex; align-items: center; white-space: nowrap; }
.nrow.top { padding-left: 10px; }
.chev { width: 9px; height: 9px; flex: none; }
.fold { width: 16px; height: 16px; margin-left: 7px; flex: none; }
.top-t { margin-left: 4px; }
.g0 { position: absolute; left: 14px; top: 0; bottom: 0; border-left: 1px dotted #777; }
.g1 { position: absolute; left: 33px; top: 0; bottom: 0; width: 11px; border-left: 1px dotted #777; }
.g1::after { content: ""; position: absolute; left: 0; top: 8px; width: 11px; border-top: 1px dotted #777; }
.g1.last { bottom: 8px; }
.nsel { display: flex; align-items: center; margin-left: 43px; padding-right: 2px; padding-left: 2px; height: 16px; gap: 5px; }
.nsel.on { background: #d8d8d8; width: 78px; }
.nic { width: 15px; height: 15px; flex: none; }
.float { position: absolute; left: 132px; top: 464px; width: 15px; height: 15px; }

.mid { width: 182px; flex: none; margin-left: 6px; display: flex; flex-direction: column; }
.mtool { height: 27px; flex: none; display: flex; align-items: center; background: linear-gradient(#f8f8f8, #eee); padding-left: 4px; gap: 8px; font-size: 12px; white-space: nowrap; }
.mi { display: flex; align-items: center; gap: 3px; }
.sepl { border-left: 1px solid #aaa; padding-left: 2px; margin-left: -1px; }
.search { height: 32px; flex: none; display: flex; align-items: center; gap: 5px; padding-left: 1px; }
.sbox { width: 157px; height: 24px; border: 1px solid #888; background: #fff; box-sizing: border-box; color: #909090; font-size: 12.500px; line-height: 21px; padding-left: 3px; flex: none; }
.search .i18 { width: 18px; height: 18px; margin-left: 3px; }
.cts { position: relative; height: 562px; flex: none; border: 1px solid #888; background: #fff; overflow: hidden; box-sizing: border-box; padding-top: 0; }
.crow { height: 16px; position: relative; display: flex; align-items: center; white-space: nowrap; }
.crow.par { padding-left: 27px; }
.crow.kid { padding-left: 62px; }
.cchev { width: 9px; height: 9px; flex: none; }
.cg { width: 9px; height: 16px; flex: none; position: relative; box-sizing: border-box; }
.cg::before { content: ""; position: absolute; left: 4px; top: 0; bottom: 0; border-left: 1px dotted #777; }
.cg::after { content: ""; position: absolute; left: 5px; top: 8px; width: 10px; border-top: 1px dotted #777; }
.cdot { width: 5px; height: 0; border-top: 1px dotted #777; margin-left: 3px; flex: none; }
.kg { position: absolute; left: 50px; top: -4px; height: 12px; width: 12px; border-left: 1px dotted #777; border-bottom: 1px dotted #777; }
.csel { display: flex; align-items: center; height: 16px; gap: 6px; padding-left: 3px; margin-left: -3px; }
.par .csel { margin-left: 0; padding-left: 0; }
.kid .csel { width: 90px; padding-right: 0; gap: 9px; }
.csel.on { background: #316ac5; color: #fff; }
.cic { width: 12px; height: 12px; flex: none; }

.right { flex: 1; margin-left: 8px; margin-top: 28px; height: 591px; border: 1px solid #aaa; background: #fff; box-sizing: border-box; min-width: 0; }
.tab { height: 20px; padding-left: 3px; font-size: 13px; line-height: 20px; border-bottom: 1px solid #ccc; }
.table { padding-left: 2px; font-size: 13px; }
.thead, .trow { display: flex; }
.thead { height: 25px; margin-top: 3px; }
.trow { height: 19px; }
.num { width: 20px; flex: none; background: #f0f0f0; border: 1px solid #d8d8d8; border-width: 0 1px 1px 0; box-sizing: border-box; text-align: center; font: 11px/18px "Liberation Mono", monospace; }
.num.cur { background: #fdd08f; color: #700070; }
.cell { width: 900px; flex: none; border-bottom: 1px solid #d8d8d8; box-sizing: border-box; padding-left: 20px; line-height: 18px; white-space: nowrap; }
.cell.on { background: #0078d7; color: #fff; }
.cell.dim { color: #808080; }
.cell.link { color: #0000d0; }
.plus { display: inline-block; width: 11px; height: 11px; border: 1px solid #888; font: 11px/10px "Liberation Sans", sans-serif; text-align: center; margin: 0 4px 0 -18px; color: #222; vertical-align: 1px; }

.status { height: 20px; flex: none; display: flex; gap: 2px; background: #f0f0f0; }
.st { height: 19px; background: #f5f5f5; border: 1px solid #ddd; box-sizing: border-box; display: flex; align-items: center; white-space: nowrap; flex: none; }
.s0 { width: 148px; } .s1 { width: 78px; } .s2 { width: 97px; } .s3 { width: 48px; padding-left: 1px; } .s4 { width: 913px; } .s5 { width: 70px; padding-left: 1px; }

.task { height: 40px; flex: none; background: #05131a; display: flex; color: #fff; position: relative; }
.start { width: 48px; background: #000; display: flex; align-items: center; justify-content: center; }
.start svg { width: 16px; height: 16px; }
.tsearch { width: 344px; background: #333; display: flex; align-items: center; color: #8c8c8c; font-size: 14px; position: relative; }
.cortana { width: 14px; height: 14px; border: 3px solid #d8d8d8; border-radius: 50%; margin: 0 6px 0 10px; }
.mic { position: absolute; left: 317px; top: 11px; width: 12px; height: 19px; }
.apps { display: flex; height: 40px; margin-left: 12px; }
.app-i { width: 24px; height: 24px; display: flex; align-items: center; justify-content: center; margin: 8px 13px 0; position: relative; }
.app-i svg { width: 24px; height: 24px; }
.a0 { margin: 8px 26px 0 0; } .a1 { margin: 8px 14px 0 0; } .a2 { margin: 8px 14px 0; } .a3 { margin: 8px 13px 0; } .a4 { margin: 8px 14px 0; } .a5 { margin: 8px 12px 0 14px; } .a6 { margin: 8px 13px 0 11px; }
.a7 { margin: 8px 13px 0 11px; } .a8 { margin: 8px 12px 0 14px; }
.a9 { margin: 0; width: 48px; height: 40px; background: #30393f; }
.a9 svg { width: 23px; height: 23px; }
.und::after { content: ""; position: absolute; left: -8px; right: -8px; bottom: -8px; height: 2px; background: #76b9ed; }
.a9.und::after { left: 0; right: 0; bottom: 0; }
.tray { position: absolute; inset: 0; pointer-events: none; }
.tr-link { position: absolute; left: 949px; top: 12px; font-size: 12px; color: #ddd; }
.cpu, .clock { position: absolute; display: flex; flex-direction: column; align-items: center; font-size: 12px; line-height: 18px; top: 2px; white-space: nowrap; }
.cpu { left: 992px; width: 47px; color: #eee; }
.clock { left: 1247px; width: 59px; color: #eee; }
.ti { position: absolute; }
.t1 { left: 1060px; top: 16px; width: 13px; height: 8px; }
.t2 { left: 1081px; top: 10px; width: 17px; height: 16px; }
.t3 { left: 1109px; top: 12px; width: 14px; height: 14px; }
.t4 { left: 1129px; top: 11px; width: 17px; height: 16px; }
.t5 { left: 1154px; top: 12px; width: 22px; height: 15px; }
.t6 { position: absolute; left: 1187px; top: 11px; font-size: 13px; font-weight: 700; }
.t7, .slogo { display: flex; align-items: center; justify-content: center; background: #f0501e; border-radius: 3px; transform: rotate(-8deg); }
.t7 { position: absolute; left: 1214px; top: 12px; width: 15px; height: 16px; font: bold 13px/1 "Liberation Sans", sans-serif; }
.t8 { left: 1325px; top: 11px; width: 16px; height: 18px; }

.dlg { position: absolute; left: 416px; top: 83px; width: 920px; height: 547px; box-sizing: border-box; background: #b9cfe9; border: 1px solid #4f6a88; border-top: none; border-right-color: #222; padding: 0 7px 7px; display: flex; flex-direction: column; }
.dlg::before { content: ""; position: absolute; left: 0; right: 0; top: 0; height: 28px; background: linear-gradient(#8eacce, #b8d0ea); }
.dlg-t { height: 28px; flex: none; position: relative; font-size: 12px; line-height: 36px; padding-left: 0; }
.dlg-b { flex: 1; display: flex; flex-direction: column; background: #f0f0f0; position: relative; min-height: 0; }
.radios { height: 35px; flex: none; display: flex; align-items: center; padding-left: 138px; font-size: 12px; background: #f4f4f4; border-top: 1px solid #fff; box-sizing: border-box; }
.radio { display: flex; align-items: center; width: 368px; }
.dot { width: 11px; height: 11px; border: 1px solid #333; border-radius: 50%; background: #fff; margin-right: 3px; box-sizing: border-box; position: relative; margin-left: 1px; flex: none; }
.dot.on::after { content: ""; position: absolute; inset: 2px; border-radius: 50%; background: #333; }
.cad { display: block; width: 903px; height: 432px; flex: none; }
.ser { font-family: "Liberation Serif", serif; fill: #fff; }
.gn { font: 14.500px "Liberation Mono", monospace; letter-spacing: -.7px; fill: #0f0; }
.zh-c { font-family: "Noto Sans CJK SC", sans-serif; fill: #fff; }
.dlg-f { flex: 1; display: flex; justify-content: flex-end; align-items: center; padding-right: 27px; }
.peijin { width: 73px; height: 24px; background: #e4e4e4; border: 1px solid #aaa; font-size: 12.500px; margin-top: 0; }

.ball { position: absolute; left: 1113px; top: -28px; width: 46px; height: 46px; border-radius: 50%; background: radial-gradient(circle at 50% 70%, #6fd36a, #22a83a); border: 1px solid #9ab; box-shadow: 0 1px 2px #888; display: flex; align-items: flex-end; justify-content: center; color: #fff; font: bold 11px/14px "Liberation Sans", sans-serif; padding-bottom: 3px; box-sizing: border-box; }
.sogou { position: absolute; left: 750px; top: 3px; width: 200px; height: 24px; box-sizing: border-box; background: #fff; border: 1px solid #b8cfe4; display: flex; align-items: center; gap: 4px; padding-left: 25px; }
.sogou svg { width: 18px; height: 18px; flex: none; }
.slogo { position: absolute; left: -3px; top: -1px; width: 24px; height: 24px; font: bold 20px/1 "Liberation Sans", sans-serif; color: #fff; }
.sg-t { color: #1b78c8; font-size: 14px; font-weight: 700; width: 18px; text-align: center; }
.sg-p { color: #1b78c8; font: bold 12px/1 "Liberation Sans", sans-serif; width: 18px; text-align: center; margin-right: 3px; }
</style>
